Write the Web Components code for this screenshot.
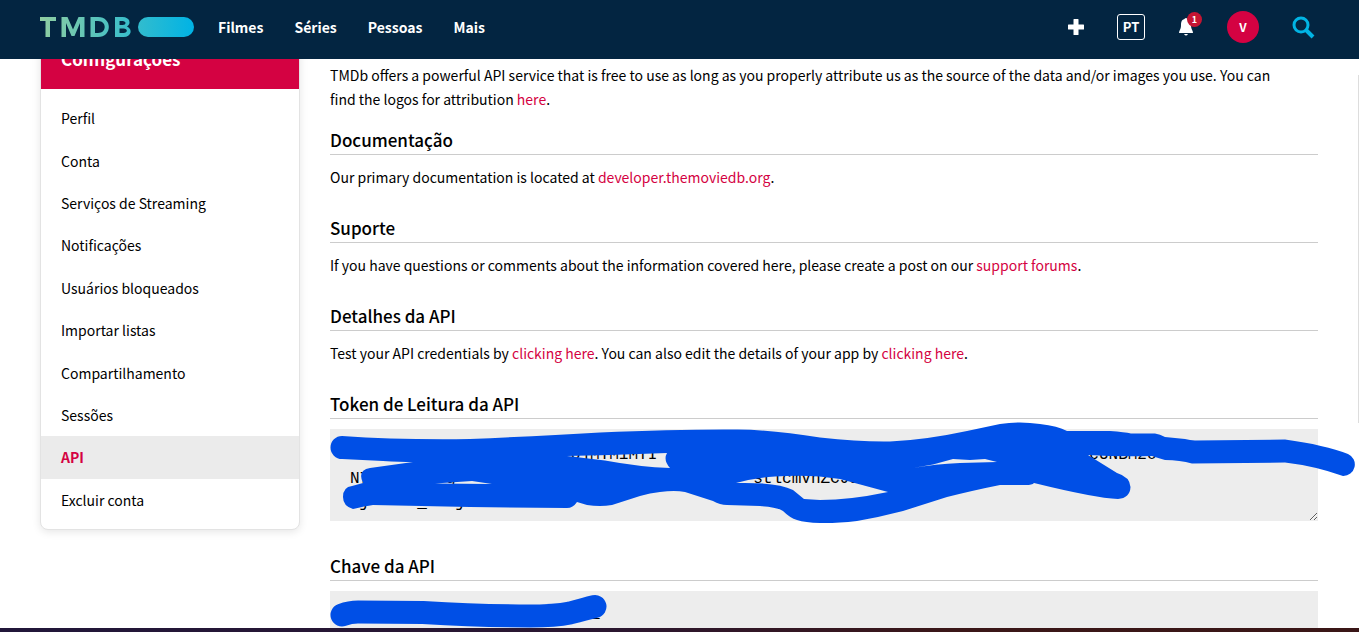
<!DOCTYPE html>
<html lang="pt"><head><meta charset="utf-8"><title>API — TMDB</title>
<style>
html,body{height:100%}
body{margin:0;font:14px/24px "Noto Sans CJK SC","Noto Sans",sans-serif;color:#000;background:#fff;overflow:hidden}
</style></head><body>
<tmdb-page></tmdb-page>
<script>
const define = (name, html, setup) => customElements.define(name, class extends HTMLElement {
  constructor() { super(); this.attachShadow({mode:'open'}).innerHTML = html; }
  connectedCallback() { if (setup) setup(this, this.shadowRoot); }
});

define('tmdb-header', `<style>
:host{display:flex;align-items:center;justify-content:space-between;height:59px;flex:none;box-sizing:border-box;padding:0 44px 6px 40px;background:#032541;color:#fff;position:relative;z-index:2}
nav,.tools{display:flex;align-items:center}
a{color:inherit;text-decoration:none;font-weight:700}
nav a{margin-right:31px}
nav .logo{margin-right:24px;display:block;height:20px}
svg{display:block}
.tools{gap:32px}
button{all:unset;display:block;cursor:pointer;font-weight:700}
.lang{box-sizing:border-box;width:28px;height:26px;border:1px solid #fff;border-radius:3px;text-align:center;font-size:13px;line-height:22px}
.bell{position:relative}
.bell span{position:absolute;left:10px;top:-5px;width:15px;height:15px;border-radius:50%;background:#c41533;font-size:9px;line-height:15px;text-align:center}
.user{width:32px;height:32px;border-radius:50%;background:#d40242;text-align:center;font-size:12px;line-height:31px}
</style>
<nav>
<a class="logo" href="#" aria-label="TMDB"><svg width="154" height="20" viewBox="0 0 154 20"><defs><linearGradient id="g" gradientUnits="userSpaceOnUse" x1="0" y1="0" x2="154" y2="0"><stop offset="0" stop-color="#90cea1"/><stop offset=".56" stop-color="#3cbec9"/><stop offset="1" stop-color="#00b3e5"/></linearGradient></defs><path fill="url(#g)" d="M0 0h16v4h-6v16h-4.500V4H0zM21.500 0h6l5.500 12.500L38.500 0h6v20h-4.500V6l-5.500 13h-3L26 6v14h-4.500zM50.500 0H58c14.500 0 14.500 20 0 20h-7.500zm4.500 4v12h3c9 0 9-12 0-12zM75 0h7.500c7.500 0 9 7 4.500 9.500C93 12 91.500 20 83.500 20H75zm4.500 4v4h3c4 0 4-4 0-4zm0 7.500V16h4c4.500 0 4.500-4.500 0-4.500z"/><rect x="98" width="56" height="20" rx="10" fill="url(#g)"/></svg></a>
<a href="#">Filmes</a><a href="#">Séries</a><a href="#">Pessoas</a><a href="#">Mais</a></nav>
<div class="tools">
<button aria-label="Adicionar"><svg width="18" height="18" viewBox="0 0 18 18"><path d="M6.500 1.500q0-.5.500-.5h4q.5 0 .5.500v5h5q.5 0 .5.500v4q0 .5-.5.500h-5v5q0 .5-.5.500h-4q-.5 0-.5-.5v-5h-5q-.5 0-.5-.5V7q0-.5.500-.5h5z" fill="#fff"/></svg></button>
<button class="lang">PT</button>
<button class="bell" aria-label="Notificações"><svg width="18" height="20" viewBox="0 0 18 20"><path d="M9 1c1 0 1.500 1 1.500 1C14 3 14 6 14 9c0 3 2 4.500 2 7H2c0-2.500 2-4 2-7 0-3 0-6 3.500-7C7.500 2 8 1 9 1zM7 17h4q-2 3-4 0z" fill="#fff"/></svg><span>1</span></button>
<button class="user">V</button>
<button aria-label="Buscar"><svg width="24" height="24" viewBox="0 0 24 24" fill="none" stroke="#01b4e4"><circle cx="10" cy="10" r="7" stroke-width="3"/><path d="M15 15l7 7" stroke-width="4"/></svg></button>
</div>`);

define('settings-menu', `<style>
:host{display:block;flex:none;width:260px;box-sizing:border-box;border:1px solid #e3e3e3;border-radius:8px;overflow:hidden;box-shadow:0 2px 8px rgba(0,0,0,.1);background:#fff}
h2{margin:0;padding:16px 20px;background:#d40242;color:#fff;font-size:17px;line-height:28px;font-weight:700}
nav{height:424px;padding:8px 0;display:grid;grid-auto-rows:1fr}
::slotted(a){display:flex;align-items:center;padding:0 20px;color:#000;text-decoration:none}
::slotted(a[aria-current]){background:#ebebeb;color:#d40242;font-weight:700}
</style><h2><slot name="title"></slot></h2><nav><slot></slot></nav>`);

define('doc-section', `<style>
:host{display:block}
h3{margin:0 0 10px;padding-bottom:2px;border-bottom:1px solid #ccc;font-size:17px;line-height:25px;font-weight:500}
</style><h3><slot name="title"></slot></h3><slot></slot>`);

define('secret-field', `<style>
:host{display:block;position:relative;margin-bottom:32px}
textarea{display:block;width:100%;height:92px;box-sizing:border-box;border:0;margin:0;padding:14px 20px 0;background:#ededed;color:#000;font:16px/24px "Liberation Mono",monospace;white-space:pre;resize:vertical;outline:0;overflow:hidden}
:host([short]) textarea{height:46px;padding-top:10px}
::slotted(svg){position:absolute;left:0;top:-10px;overflow:visible;pointer-events:none}
</style><textarea readonly spellcheck="false"></textarea><slot></slot>`, (host, root) => {
  const area = root.querySelector('textarea');
  area.setAttribute('aria-label', host.getAttribute('label'));
  // Each row is a list of column:text pieces; everything else stays blank.
  area.value = host.getAttribute('pieces').split('|').map(row =>
    row.split(' ').reduce((line, piece) => {
      const [col, text] = piece.split(':');
      return line.padEnd(+col) + text;
    }, '')).join('\n');
});

define('tmdb-page', `<style>
:host{display:flex;flex-direction:column;height:100%}
main{flex:1;min-height:0;overflow:hidden;display:flex;align-items:flex-start;gap:30px;padding:0 41px 0 40px;position:relative}
settings-menu{margin-top:-31px}
article{flex:1;min-width:0;padding-top:4px}
p{margin:0 24px 26px 0}
article>p{margin-bottom:16px}
p a{color:#d40242;text-decoration:none}
.rail{position:absolute;right:0;top:16px;width:1px;height:348px;background:#ddd}
footer{height:4px;flex:none;background:linear-gradient(90deg,#21173a,#2b1730 45%,#3b1718 70%,#3a1617)}
</style>
<tmdb-header></tmdb-header>
<main>
<settings-menu><span slot="title">Configurações</span>
<a href="#">Perfil</a><a href="#">Conta</a><a href="#">Serviços de Streaming</a><a href="#">Notificações</a><a href="#">Usuários bloqueados</a><a href="#">Importar listas</a><a href="#">Compartilhamento</a><a href="#">Sessões</a><a href="#" aria-current="page">API</a><a href="#">Excluir conta</a></settings-menu>
<article>
<p>TMDb offers a powerful API service that is free to use as long as you properly attribute us as the source of the data and/or images you use. You can find the logos for attribution <a href="#">here</a>.</p>
<doc-section><span slot="title">Documentação</span><p>Our primary documentation is located at <a href="#">developer.themoviedb.org</a>.</p></doc-section>
<doc-section><span slot="title">Suporte</span><p>If you have questions or comments about the information covered here, please create a post on our <a href="#">support forums</a>.</p></doc-section>
<doc-section><span slot="title">Detalhes da API</span><p>Test your API credentials by <a href="#">clicking here</a>. You can also edit the details of your app by <a href="#">clicking here</a>.</p></doc-section>
<doc-section><span slot="title">Token de Leitura da API</span><secret-field label="Token de Leitura da API" pieces="23:ojMTM1MTI 77:cUNBM2o|0:N7 10:g 42:stlcmVnZCJd|1:j 7:_ 11:j">
<svg width="988" height="102" viewBox="330 420 988 102"><path fill="#004fe6" fill-rule="evenodd" d="M342 437Q400 441 470 440Q540 437 600 433.500Q680 430 738 430.500Q775 431 820 438.500Q860 443 890 442.500Q925 441 967 432L1000 425Q1020 422 1040 425Q1058 427 1067 432L1110 432Q1125 433 1131 434.500L1155 434.500Q1160 435 1165 438L1185 440Q1190 441 1195 441.500L1285 440.500Q1325 446 1348 455A11.500 11.500 0 0 1 1343 477Q1315 467 1285 463.500L1192 464.500Q1180 461 1165 461Q1158 459 1152 457Q1120 458 1088 456L1117 474Q1130 478 1130.500 488Q1130 499 1118 500Q1095 499 1034 484Q1032 486 1026 486L1000 486Q975 491 947 498L903 512Q880 518 857 522Q835 524.500 820 524Q805 523.500 797 521Q790 519 783 512Q777 508 760 507L727 506Q720 506 713 502L685 493Q675 491 660 493Q650 494 640 497L612 506Q600 508 587 506L577 503Q573 509 567 509L470 508L373 506Q365 507 353 510Q343 507 343 498Q343 488 352 487L363 484Q357 471 370 469L413 463Q400 463 383 462L342 460A11.500 11.500 0 0 1 342 437zM567 457L605 461.500Q640 468 670 469Q663 461 667 454L610 456zM736 484Q755 479 775 477.500Q810 475 840 480L888 493Q850 501 820 501L804 500L793 491Q777 483 736 484zM913 469L933 465.500L953 460L970 461L985 460L997 463L960 464Q935 465 913 469zM435 484.500L472 482L492 485z"/></svg></secret-field></doc-section>
<doc-section><span slot="title">Chave da API</span><secret-field short label="Chave da API" pieces="25:_">
<svg width="988" height="102" viewBox="330 582 988 102"><path fill="none" stroke="#004fe6" stroke-width="23" stroke-linecap="round" stroke-linejoin="round" d="M342 616Q350 613 358 613L423 613.500Q480 617 530 617Q555 617 570 614Q585 610 595 607.500"/></svg></secret-field></doc-section>
</article><div class="rail"></div>
</main><footer></footer>`);
</script></body></html>
